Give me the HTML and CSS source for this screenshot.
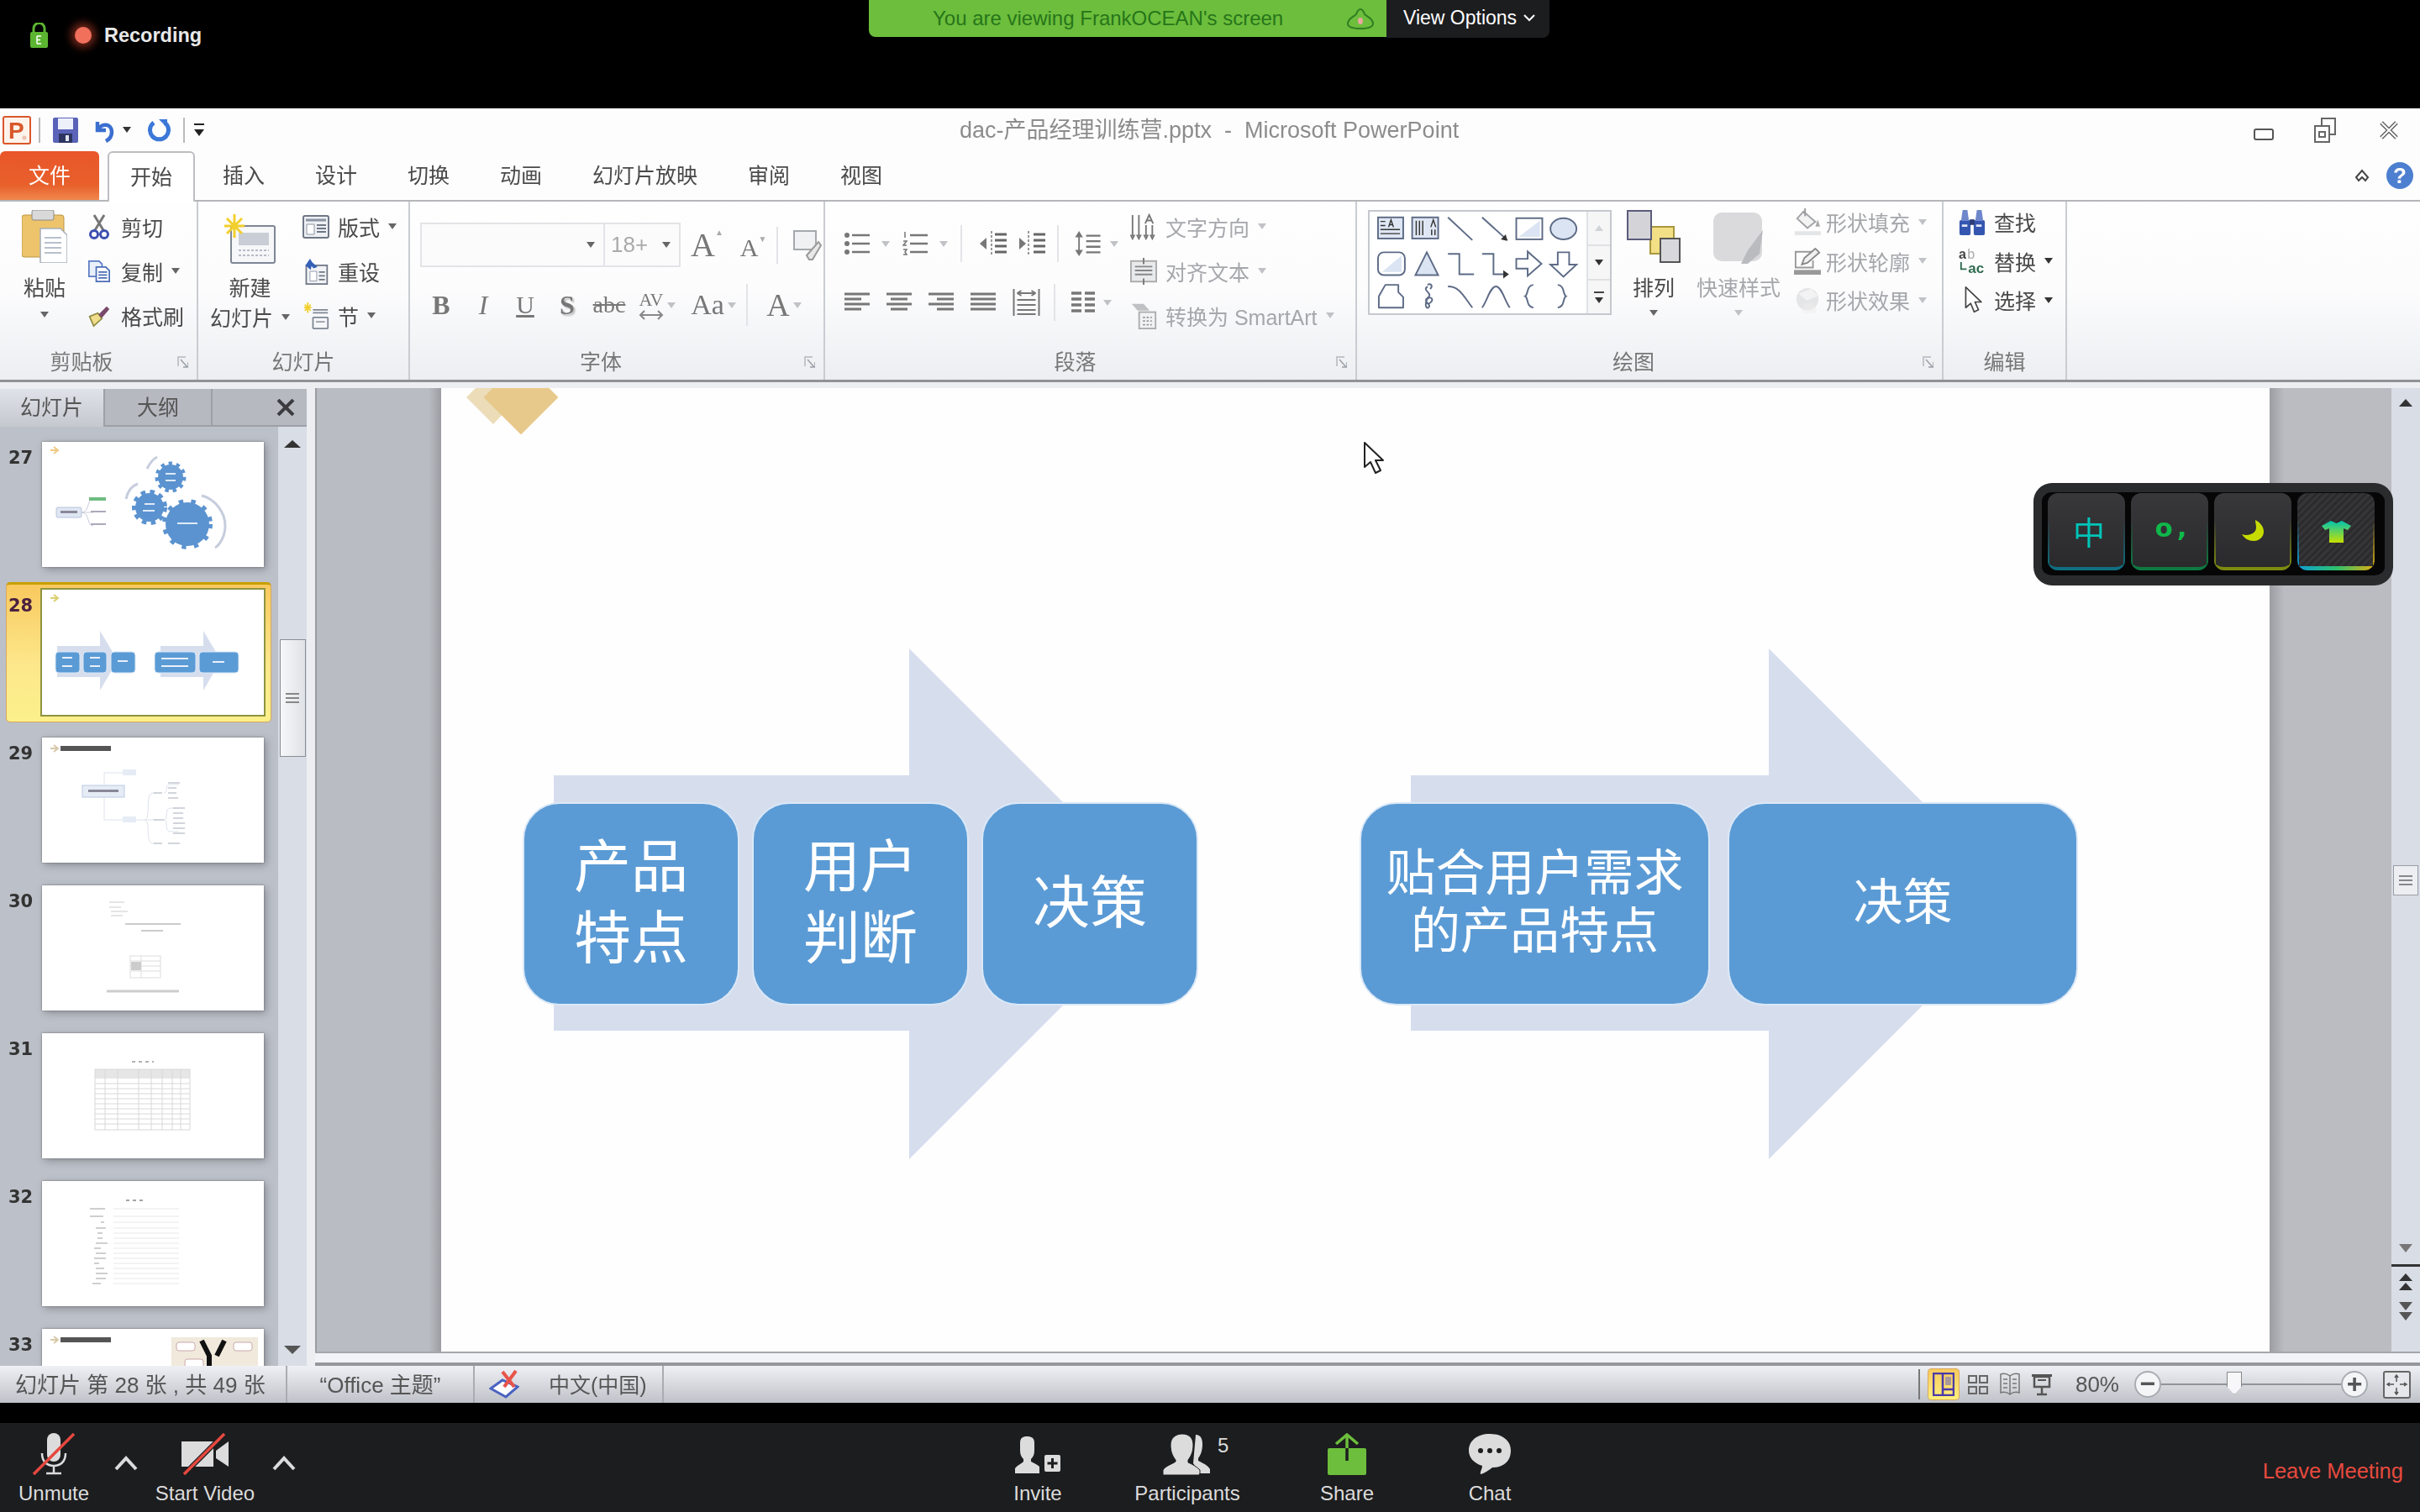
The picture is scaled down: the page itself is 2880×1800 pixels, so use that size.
FILE: index.html
```html
<!DOCTYPE html>
<html lang="zh-CN">
<head>
    <meta charset="UTF-8">
    <title>Zoom - dac-产品经理训练营.pptx</title>
    <link rel="stylesheet" href="styles.css">
</head>
<body>

    <!-- Zoom top strip -->
    <div class="topbar">
        <div class="rec">
            <svg class="lock" viewBox="0 0 21 30"><path d="M4 13V7a6.500 6.500 0 0 1 13 0v6" fill="none" stroke="#5cb531" stroke-width="3"/><rect y="11" width="21" height="19" rx="2" fill="#5cb531"/><path d="M8 16h5M8 20.500h4M8 25h5M8 16v9" stroke="#fff" stroke-width="1.500" fill="none"/></svg>
            <span class="rec-dot"></span>
            <span class="rec-text">Recording</span>
        </div>
        <div class="banner">
            <span class="banner-text">You are viewing FrankOCEAN's screen</span>
            <svg class="banner-ico" viewBox="0 0 32 25"><path d="M16 1c3 0 4 3 5 6 2 2 10 5 10 11 0 4-6 6-15 6S1 22 1 18c0-6 8-9 10-11 1-3 2-6 5-6z" fill="none" stroke="#2f7d22" stroke-width="2"/><ellipse cx="16" cy="15" rx="3" ry="4" fill="#e9a7a0"/></svg>
        </div>
        <div class="view-options">View Options <svg class="chev" viewBox="0 0 14 9"><path d="M1 1l6 6 6-6" fill="none" stroke="#fff" stroke-width="2"/></svg></div>
    </div>

    <!-- PowerPoint window -->
    <div class="ppt">
        <div class="titlebar">
            <div class="qat">
                <svg class="qat-logo" viewBox="0 0 34 34"><rect x="1" y="1" width="32" height="32" rx="2" fill="#fdf3ea" stroke="#d9572b" stroke-width="2"/><text x="7" y="27" class="qat-p">P</text><circle cx="26" cy="26" r="2.500" fill="#f0c0b0"/></svg>
                <span class="qat-sep"></span>
                <svg class="qat-save" viewBox="0 0 30 30"><rect width="30" height="30" rx="2" fill="#5a63b8"/><rect x="6" y="1" width="18" height="13" fill="#eef1fa"/><rect x="7" y="19" width="16" height="11" fill="#2d3560"/><rect x="15" y="21" width="4" height="7" fill="#dfe3ef"/></svg>
                <svg class="qat-undo" viewBox="0 0 25 30"><path d="M5 5v10h10M6 14C10 6 22 7 22 17c0 5-3 9-7 11" fill="none" stroke="#3b6fd0" stroke-width="4.500"/></svg>
                <span class="caret caret-dark"></span>
                <svg class="qat-redo" viewBox="0 0 27 30"><path d="M20 6a11 11 0 1 1-13 0" fill="none" stroke="#3b78d8" stroke-width="5"/><path d="M13 2h10v10z" fill="#3b78d8"/></svg>
                <span class="qat-sep qat-sep-b"></span>
                <svg class="qat-more" viewBox="0 0 14 16"><path d="M1 1h12" stroke="#222" stroke-width="2"/><path d="M1 7h12l-6 8z" fill="#222"/></svg>
            </div>
            <div class="doc-title">dac-产品经理训练营.pptx  -  Microsoft PowerPoint</div>
            <div class="winctl">
                <svg class="win-min" viewBox="0 0 24 14"><rect x="1" y="1" width="22" height="12" rx="2" fill="#fff" stroke="#555" stroke-width="2"/></svg>
                <svg class="win-max" viewBox="0 0 26 30"><rect x="9" y="1" width="16" height="19" fill="#fff" stroke="#666" stroke-width="2"/><rect x="1" y="10" width="17" height="19" fill="#fff" stroke="#666" stroke-width="2"/><rect x="6" y="17" width="7" height="6" fill="none" stroke="#666" stroke-width="2"/></svg>
                <svg class="win-close" viewBox="0 0 24 24"><path d="M3 3l18 18M21 3L3 21" stroke="#666" stroke-width="5"/><path d="M3 3l18 18M21 3L3 21" stroke="#fff" stroke-width="2"/></svg>
            </div>
        </div>

        <div class="tabs">
            <div class="tab tab-file">文件</div>
            <div class="tab tab-active">开始</div>
            <div class="tab">插入</div>
            <div class="tab">设计</div>
            <div class="tab">切换</div>
            <div class="tab">动画</div>
            <div class="tab">幻灯片放映</div>
            <div class="tab">审阅</div>
            <div class="tab">视图</div>
            <div class="tab-tools">
                <svg class="collapse" viewBox="0 0 20 18"><path d="M3 11l7-8 7 8-3 4-4-4-4 4z" fill="#fff" stroke="#444" stroke-width="2"/></svg>
                <div class="help">?</div>
            </div>
        </div>

        <div class="ribbon">
            <!-- 剪贴板 -->
            <section class="group group-clip">
                <div class="group-body">
                    <div class="tall paste">
                        <svg class="paste-ico" viewBox="0 0 54 63"><rect y="6" width="50" height="50" rx="3" fill="#edc46b" stroke="#bb9544"/><rect x="12" width="26" height="12" rx="2" fill="#d9d9d9" stroke="#8a8a8a"/><path d="M22 22h24l8 8v33H22z" fill="#fff" stroke="#a7adb8" stroke-width="1.500"/><path d="M27 33h20M27 39h20M27 45h20M27 51h20" stroke="#b8c0cc" stroke-width="2"/></svg>
                        <span>粘贴</span>
                        <i class="caret tall-caret"></i>
                    </div>
                    <div class="small-col">
                        <div class="small">
                            <svg class="ico ico-s" viewBox="0 0 22 30"><path d="M5 1l11 18M17 1L6 19" stroke="#777" stroke-width="3"/><circle cx="5" cy="24" r="4.500" fill="none" stroke="#3c4fb0" stroke-width="3"/><circle cx="17" cy="24" r="4.500" fill="none" stroke="#3c4fb0" stroke-width="3"/></svg>
                            <span>剪切</span>
                        </div>
                        <div class="small">
                            <svg class="ico ico-s" viewBox="0 0 30 30"><path d="M1 1h14l4 4v17H1z" fill="#eaf0fb" stroke="#5b7cc4" stroke-width="2"/><path d="M11 9h13l5 5v15H11z" fill="#fff" stroke="#4a6cb8" stroke-width="2"/><path d="M14 16h12M14 20h12M14 24h12" stroke="#4a6cb8" stroke-width="2"/></svg>
                            <span>复制</span><i class="caret"></i>
                        </div>
                        <div class="small">
                            <svg class="ico ico-s" viewBox="0 0 32 32"><path d="M2 17l12-5 6 8-12 11z" fill="#f0dd8c" stroke="#8a8a3c" stroke-width="2"/><path d="M15 14L27 2l4 4-11 13z" fill="#7a4a6a"/></svg>
                            <span>格式刷</span>
                        </div>
                    </div>
                </div>
                <div class="group-label label-clip">剪贴板<svg class="launcher" viewBox="0 0 14 16"><path d="M1 1h10v2H3v10H1z" fill="#c2c5ca"/><path d="M5 5l8 9M8 14h6V8" fill="none" stroke="#9aa0a8" stroke-width="1.500"/></svg></div>
            </section>

            <!-- 幻灯片 -->
            <section class="group group-slides">
                <div class="group-body">
                    <div class="tall new-slide">
                        <svg class="new-ico" viewBox="0 0 62 60"><rect x="8" y="14" width="52" height="44" rx="2" fill="#f6f7f9" stroke="#7f8794" stroke-width="2"/><rect x="17" y="22" width="36" height="15" fill="#c9ced6"/><path d="M17 43h36M17 49h36" stroke="#b5bbc4" stroke-width="2" stroke-dasharray="3 2"/><path d="M12 0v28M0 14h24M3 5l18 18M21 5L3 23" stroke="#f3cf2d" stroke-width="3"/></svg>
                        <span>新建</span>
                        <span class="tall-line">幻灯片<i class="caret"></i></span>
                    </div>
                    <div class="small-col">
                        <div class="small">
                            <svg class="ico" viewBox="0 0 32 28"><rect x="1" y="1" width="30" height="26" rx="2" fill="#eef0f4" stroke="#6f7785" stroke-width="2"/><path d="M4 6h24" stroke="#8a93a3" stroke-width="3"/><path d="M5 11h9v12H5z" fill="#fff" stroke="#8a93a3"/><path d="M17 12h11M17 16h11M17 20h11" stroke="#6f7785" stroke-width="2"/></svg>
                            <span>版式</span><i class="caret"></i>
                        </div>
                        <div class="small">
                            <svg class="ico" viewBox="0 0 32 36"><rect x="3" y="10" width="28" height="25" fill="#f1f3f6" stroke="#6f7785" stroke-width="2"/><path d="M8 18h9v13H8z" fill="#fff" stroke="#8a93a3"/><path d="M20 19h8M20 24h8M20 29h8" stroke="#6f7785" stroke-width="2"/><path d="M2 10l6-9 3 5 7 6-5 2-3-3-1 5z" fill="#3560b8"/></svg>
                            <span>重设</span>
                        </div>
                        <div class="small">
                            <svg class="ico" viewBox="0 0 32 36"><path d="M5 0v14M0 7h10M1 3l8 8M9 3l-8 8" stroke="#f3cf2d" stroke-width="2"/><path d="M12 10h20M12 14h20" stroke="#7f8794" stroke-width="2"/><rect x="12" y="20" width="20" height="15" rx="1" fill="#f6f7f9" stroke="#7f8794" stroke-width="2"/><path d="M16 26h12" stroke="#9aa0a8" stroke-width="2"/></svg>
                            <span>节</span><i class="caret"></i>
                        </div>
                    </div>
                </div>
                <div class="group-label">幻灯片</div>
            </section>

            <!-- 字体 -->
            <section class="group group-font">
                <div class="group-body font-body">
                    <div class="font-row">
                        <div class="combo combo-name"><i class="caret"></i></div>
                        <div class="combo combo-size"><span>18+</span><i class="caret"></i></div>
                        <span class="grow-a">A<sup>▲</sup></span>
                        <span class="shrink-a">A<sup>▼</sup></span>
                        <span class="vsep"></span>
                        <svg class="clear-ico" viewBox="0 0 34 36"><rect x="1" y="1" width="26" height="22" fill="#f0f1f3" stroke="#a5a8ad" stroke-width="2"/><path d="M16 30l14-16 3 4-10 17h-4z" fill="#e8e8e8" stroke="#9a9a9a" stroke-width="2"/></svg>
                    </div>
                    <div class="font-row font-row-b">
                        <span class="fmt fmt-b">B</span>
                        <span class="fmt fmt-i">I</span>
                        <span class="fmt fmt-u">U</span>
                        <span class="fmt fmt-sh">S</span>
                        <span class="fmt fmt-st">abc</span>
                        <span class="fmt fmt-av">
                            <span class="av-stack">AV<svg class="av-arrow" viewBox="0 0 30 12"><path d="M2 6h26M7 1L2 6l5 5M23 1l5 5-5 5" fill="none" stroke="#888" stroke-width="2"/></svg></span>
                            <i class="caret caret-off"></i>
                        </span>
                        <span class="fmt fmt-aa">Aa<i class="caret caret-off"></i></span>
                        <span class="vsep vsep-b"></span>
                        <span class="fmt fmt-color">A<i class="caret caret-off"></i></span>
                    </div>
                </div>
                <div class="group-label label-font">字体<svg class="launcher" viewBox="0 0 14 16"><path d="M1 1h10v2H3v10H1z" fill="#c2c5ca"/><path d="M5 5l8 9M8 14h6V8" fill="none" stroke="#9aa0a8" stroke-width="1.500"/></svg></div>
            </section>

            <!-- 段落 -->
            <section class="group group-para">
                <div class="group-body">
                    <div class="para-left">
                        <div class="para-row">
                            <svg class="pico" viewBox="0 0 30 30"><path d="M9 5h21M9 15h21M9 25h21" stroke="#777" stroke-width="2.500"/><circle cx="3" cy="5" r="3" fill="#777"/><circle cx="3" cy="15" r="3" fill="#777"/><circle cx="3" cy="25" r="3" fill="#777"/></svg>
                            <i class="caret caret-off pcaret"></i>
                            <svg class="pico" viewBox="0 0 30 30"><path d="M9 5h21M9 15h21M9 25h21" stroke="#777" stroke-width="2.500"/><path d="M3 1v7M1 12h4l-4 5h4M1 22h4l-2 3 2 3H1" fill="none" stroke="#777" stroke-width="1.500"/></svg>
                            <i class="caret caret-off pcaret"></i>
                            <span class="vsep vsep-p"></span>
                            <svg class="pico-w" viewBox="0 0 33 32"><path d="M15 1v30" stroke="#999" stroke-width="2" stroke-dasharray="3 2"/><path d="M19 5h14M19 12h14M19 19h14M19 26h14" stroke="#666" stroke-width="3"/><path d="M1 16l8-7v14z" fill="#777"/></svg>
                            <svg class="pico-w pico-gap" viewBox="0 0 33 32"><path d="M13 1v30" stroke="#999" stroke-width="2" stroke-dasharray="3 2"/><path d="M19 5h14M19 12h14M19 19h14M19 26h14" stroke="#666" stroke-width="3"/><path d="M10 16l-8-7v14z" fill="#777"/></svg>
                            <span class="vsep vsep-q"></span>
                            <svg class="pico-w" viewBox="0 0 32 34"><path d="M5 4v26" stroke="#777" stroke-width="2"/><path d="M5 1l5 8H0zM5 33l5-8H0z" fill="#777"/><path d="M14 7h18M14 14h18M14 21h18M14 28h18" stroke="#777" stroke-width="2.500"/></svg>
                            <i class="caret caret-off"></i>
                        </div>
                        <div class="para-row para-row-b">
                            <svg class="pico al" viewBox="0 0 30 24"><path d="M0 2h30M0 8h20M0 14h30M0 20h20" stroke="#777" stroke-width="3"/></svg>
                            <svg class="pico al" viewBox="0 0 30 24"><path d="M0 2h30M5 8h20M0 14h30M5 20h20" stroke="#777" stroke-width="3"/></svg>
                            <svg class="pico al" viewBox="0 0 30 24"><path d="M0 2h30M10 8h20M0 14h30M10 20h20" stroke="#777" stroke-width="3"/></svg>
                            <svg class="pico al" viewBox="0 0 30 24"><path d="M0 2h30M0 8h30M0 14h30M0 20h30" stroke="#777" stroke-width="3"/></svg>
                            <svg class="pico-w" viewBox="0 0 32 32"><path d="M1 0v32M31 0v32M6 5h20M5 5l5-3M5 5l5 3M27 5l-5-3M27 5l-5 3M5 13h22M5 19h22M5 25h22M5 30h22" fill="none" stroke="#777" stroke-width="2"/></svg>
                            <span class="vsep vsep-r"></span>
                            <svg class="pico pico-col" viewBox="0 0 28 28"><path d="M0 3h12M16 3h12M0 10h12M16 10h12M0 17h12M16 17h12M0 24h12M16 24h12" stroke="#777" stroke-width="3.500"/></svg>
                            <i class="caret caret-off"></i>
                        </div>
                    </div>
                    <div class="small-col para-right">
                        <div class="small off">
                            <svg class="ico" viewBox="0 0 34 32"><path d="M3 1v27M11 1v27M3 31l-2-4h4zM11 31l-2-4h4zM20 14v14M28 14v14M20 31l-2-4h4zM28 31l-2-4h4z" fill="none" stroke="#777" stroke-width="2"/><path d="M19 12l5-11 5 11M21 8h6" fill="none" stroke="#777" stroke-width="2"/></svg>
                            <span>文字方向</span><i class="caret caret-off"></i>
                        </div>
                        <div class="small off">
                            <svg class="ico" viewBox="0 0 34 34"><rect x="1" y="4" width="32" height="26" fill="#e9eaec" stroke="#aaa" stroke-width="2"/><path d="M6 11h22M6 16h22M6 21h22" stroke="#888" stroke-width="2"/><path d="M17 0v8M17 34v-8" stroke="#777" stroke-width="2"/></svg>
                            <span>对齐文本</span><i class="caret caret-off"></i>
                        </div>
                        <div class="small off">
                            <svg class="ico" viewBox="0 0 34 36"><path d="M1 2h16l8 9H9z" fill="#bfc1c5"/><rect x="11" y="13" width="22" height="22" fill="#f1f2f4" stroke="#aaa" stroke-width="2"/><path d="M16 20h12M16 25h12M16 30h12" stroke="#999" stroke-width="2" stroke-dasharray="3 2"/></svg>
                            <span>转换为 SmartArt</span><i class="caret caret-off"></i>
                        </div>
                    </div>
                </div>
                <div class="group-label label-para">段落<svg class="launcher" viewBox="0 0 14 16"><path d="M1 1h10v2H3v10H1z" fill="#c2c5ca"/><path d="M5 5l8 9M8 14h6V8" fill="none" stroke="#9aa0a8" stroke-width="1.500"/></svg></div>
            </section>

            <!-- 绘图 -->
            <section class="group group-draw">
                <div class="group-body">
                    <div class="gallery">
                        <svg class="shapes" viewBox="0 0 260 125" fill="none" stroke="#5d6b86" stroke-width="2">
                            <rect x="7" y="7" width="31" height="26" fill="#dfe7f4"/><path d="M20 19l3-9 3 9M21 16h4M10 12h6M10 17h6M10 22h24M10 27h24" stroke="#333" stroke-width="1.500"/>
                            <rect x="49" y="7" width="32" height="26" fill="#dfe7f4"/><path d="M54 11v18M58 11v18M62 11v18M72 19l3-9 3 9M73 22v7M77 22v7" stroke="#333" stroke-width="1.500"/>
                            <path d="M93 7l30 28"/>
                            <path d="M135 7l31 28"/><path d="M166 36l-8-2 6-6z" fill="#333" stroke="none"/>
                            <rect x="177" y="8" width="32" height="26"/><path d="M180 31l26-20v20z" fill="#dbe4f2" stroke="none"/>
                            <ellipse cx="235" cy="21" rx="16" ry="13" fill="#dbe4f2"/>
                            <rect x="7" y="50" width="33" height="28" rx="7"/><path d="M12 74l24-20v20z" fill="#dbe4f2" stroke="none"/>
                            <path d="M67 50l14 28H53z" fill="#dbe4f2"/>
                            <path d="M93 52h14v25h18"/>
                            <path d="M135 52h14v25h14"/><path d="M168 77l-7-5v10z" fill="#333" stroke="none"/>
                            <path d="M177 58h14v-9l17 15-17 15v-9h-14z" fill="#fff"/>
                            <path d="M228 50h14v15h9l-16 15-16-15h9z" fill="#fff"/>
                            <path d="M8 104l8-14h16v9l6 6v13H8z" stroke-linejoin="round"/>
                            <path d="M68 92c-8 5 8 8 0 14-7 5 6 8 1 12-6 2-3-15 3-12 5 2-3 10-5 6M68 90c4-3 7 2 3 5" />
                            <path d="M93 92c14 0 18 10 30 26"/>
                            <path d="M135 118c6-8 10-26 17-26s11 18 17 26"/>
                            <path d="M198 90c-9 1-6 12-10 14 4 2 1 13 10 14"/>
                            <path d="M228 90c9 1 6 12 10 14-4 2-1 13-10 14"/>
                        </svg>
                        <div class="gal-scroll">
                            <span class="gal-cell"><i class="caret caret-up"></i></span>
                            <span class="gal-cell gal-mid"><i class="caret caret-dark"></i></span>
                            <span class="gal-cell gal-more"><i class="gal-dash"></i><i class="caret caret-dark"></i></span>
                        </div>
                    </div>
                    <div class="tall arrange">
                        <svg class="arr-ico" viewBox="0 0 64 63"><rect x="28" y="20" width="28" height="32" fill="#f3df85" stroke="#a8983e" stroke-width="2"/><rect x="1" y="1" width="28" height="34" fill="#d4d4d8" stroke="#5b5b7a" stroke-width="2"/><rect x="40" y="34" width="23" height="28" fill="#d8d8dc" stroke="#555" stroke-width="2"/></svg>
                        <span>排列</span>
                        <i class="caret tall-caret"></i>
                    </div>
                    <div class="tall quick off">
                        <svg class="quick-ico" viewBox="0 0 62 63"><rect x="1" y="1" width="58" height="58" rx="10" fill="#dadadc"/><path d="M34 62l8-16 18-24-4 28-14 12z" fill="#b9bbbe"/></svg>
                        <span>快速样式</span>
                        <i class="caret caret-off tall-caret"></i>
                    </div>
                    <div class="small-col compact-col format-col">
                        <div class="small off">
                            <svg class="ico" viewBox="0 0 34 34"><path d="M12 4l15 13-10 8L4 13z" fill="#f3f3f4" stroke="#a0a2a6" stroke-width="2"/><path d="M14 0v10" stroke="#999" stroke-width="2"/><path d="M30 14l3 9h-6z" fill="#aaa"/><rect x="1" y="29" width="33" height="5" fill="#e4e5e7"/></svg>
                            <span>形状填充</span><i class="caret caret-off"></i>
                        </div>
                        <div class="small off">
                            <svg class="ico" viewBox="0 0 34 34"><path d="M24 5H2v20h22V16" fill="none" stroke="#999" stroke-width="2"/><path d="M10 21l3-8L27 1l5 5-15 13z" fill="#f0f0f1" stroke="#888" stroke-width="2"/><rect y="28" width="34" height="6" fill="#999"/></svg>
                            <span>形状轮廓</span><i class="caret caret-off"></i>
                        </div>
                        <div class="small off">
                            <svg class="ico" viewBox="0 0 34 34"><circle cx="17" cy="16" r="14" fill="#e4e5e7"/><path d="M6 9l16-6 8 9-14 6z" fill="#f3f3f4"/><circle cx="19" cy="29" r="9" fill="#eee" opacity=".5"/></svg>
                            <span>形状效果</span><i class="caret caret-off"></i>
                        </div>
                    </div>
                </div>
                <div class="group-label draw-label">绘图<svg class="launcher" viewBox="0 0 14 16"><path d="M1 1h10v2H3v10H1z" fill="#c2c5ca"/><path d="M5 5l8 9M8 14h6V8" fill="none" stroke="#9aa0a8" stroke-width="1.500"/></svg></div>
            </section>

            <!-- 编辑 -->
            <section class="group group-edit">
                <div class="group-body">
                    <div class="small-col compact-col">
                        <div class="small">
                            <svg class="ico" viewBox="0 0 34 34"><rect x="1" y="15" width="14" height="19" rx="2" fill="#3556b0"/><rect x="19" y="15" width="14" height="19" rx="2" fill="#3556b0"/><path d="M5 2h6l2 14H3zM23 2h6l2 14H21z" fill="#6e87cc"/><rect x="14" y="14" width="6" height="7" fill="#2a3c78"/><path d="M4 22h7M22 22h7" stroke="#dfe7f6" stroke-width="3"/></svg>
                            <span>查找</span>
                        </div>
                        <div class="small">
                            <svg class="ico" viewBox="0 0 34 34"><text x="0" y="14" class="ico-ab">a</text><text x="11" y="14" class="ico-ab ico-ab-b">b</text><text x="12" y="32" class="ico-ac">ac</text><path d="M3 18v9h7" fill="none" stroke="#2e6b4e" stroke-width="2"/></svg>
                            <span>替换</span><i class="caret caret-dark"></i>
                        </div>
                        <div class="small">
                            <svg class="ico" viewBox="0 0 34 38"><path d="M8 1v29l7-6 5 12 6-3-5-11h9z" fill="#fff" stroke="#444" stroke-width="2" stroke-linejoin="round"/></svg>
                            <span>选择</span><i class="caret caret-dark"></i>
                        </div>
                    </div>
                </div>
                <div class="group-label">编辑</div>
            </section>
        </div>

        <div class="work">
            <!-- Slide sorter panel -->
            <aside class="panel">
                <div class="panel-tabs">
                    <div class="ptab ptab-active">幻灯片</div>
                    <div class="ptab">大纲</div>
                    <div class="ptab ptab-close"><svg class="ptab-x" viewBox="0 0 22 20"><path d="M2 1l18 18M20 1L2 19" stroke="#3c3c40" stroke-width="4"/></svg></div>
                </div>
                <div class="panel-list">
                    <div class="thumbs">
                        <div class="thumb-row">
                            <span class="num">27</span>
                            <svg class="thumb" viewBox="0 0 264 149">
                                <path d="M10 10h8M14 6l5 4-5 4" stroke="#eecb84" stroke-width="2" fill="none"/>
                                <rect x="17" y="78" width="30" height="12" rx="2" fill="#dfe6f2" stroke="#b6c4dc"/><rect x="22" y="82" width="20" height="3" fill="#889"/>
                                <path d="M47 84c10 0 6-16 14-16M47 84h14M47 84c10 0 6 16 14 16" fill="none" stroke="#ccd" />
                                <rect x="56" y="66" width="20" height="4" fill="#6fbc80"/><rect x="58" y="82" width="18" height="2" fill="#aab"/><rect x="58" y="97" width="18" height="2" fill="#aab"/>
                                <circle cx="153" cy="42" r="15" fill="#5b93d0" stroke="#5b93d0" stroke-width="7" stroke-dasharray="4 4.500"/>
                                <circle cx="128" cy="78" r="17" fill="#5b93d0" stroke="#5b93d0" stroke-width="8" stroke-dasharray="5 5"/>
                                <circle cx="173" cy="98" r="26" fill="#5b93d0" stroke="#5b93d0" stroke-width="8" stroke-dasharray="5 9"/>
                                <path d="M147 38h12M147 46h12M122 74h12M120 82h14M161 97h24" stroke="#dfeaf6" stroke-width="2"/>
                                <path d="M125 32c4-8 8-12 12-14M100 68c2-10 8-16 14-18M190 64c16 4 28 20 28 36 0 12-6 22-12 26" fill="none" stroke="#c6cddd" stroke-width="3"/>
                            </svg>
                        </div>
                        <div class="thumb-row thumb-row-active">
                            <span class="num">28</span>
                            <svg class="thumb" viewBox="0 0 264 149">
                                <path d="M10 10h8M14 6l5 4-5 4" stroke="#dccf6e" stroke-width="2" fill="none"/>
                                <path d="M18 67h51V49l21 35-21 36v-16H18zM141 67h51V49l21 35-21 36v-16h-51z" fill="#d6deee"/>
                                <g fill="#5b9bd5" stroke="#dbe8f7"><rect x="16" y="74" width="29" height="25" rx="4"/><rect x="49" y="74" width="28" height="25" rx="4"/><rect x="82" y="74" width="29" height="25" rx="4"/><rect x="134" y="74" width="49" height="25" rx="4"/><rect x="187" y="74" width="47" height="25" rx="4"/></g>
                                <path d="M24 81h12M24 91h12M57 81h12M57 91h12M90 85h12M142 82h32M142 91h32M203 86h14" stroke="#e8f0fa" stroke-width="2"/>
                            </svg>
                        </div>
                        <div class="thumb-row">
                            <span class="num">29</span>
                            <svg class="thumb" viewBox="0 0 264 149">
                                <path d="M10 13h8M14 9l5 4-5 4" stroke="#d8c8a8" stroke-width="2" fill="none"/>
                                <rect x="22" y="10" width="60" height="6" fill="#555"/>
                                <rect x="48" y="57" width="50" height="14" fill="#e6ecf6" stroke="#b9c9e2"/><rect x="55" y="62" width="36" height="3" fill="#889"/>
                                <path d="M74 57V42h22M74 71v27h22M112 98h10c8 0 0-32 10-32h4M122 98h14M122 98c8 0 0 28 10 28h4M145 66c6 0 0-10 8-10h10M145 98c6 0 0-14 8-14h10M145 98c6 0 0 14 8 14h10" fill="none" stroke="#dde2ea"/>
                                <rect x="96" y="38" width="16" height="7" fill="#e6ecf6"/><rect x="96" y="94" width="16" height="7" fill="#e6ecf6"/>
                                <path d="M133 66h10M133 98h12M133 126h10M150 54h14M150 60h10M150 66h10M150 72h12M156 84h14M156 90h12M156 96h12M156 102h14M156 108h14M156 114h14M150 126h14" stroke="#c4c8d0" stroke-width="1.500"/>
                            </svg>
                        </div>
                        <div class="thumb-row">
                            <span class="num">30</span>
                            <svg class="thumb" viewBox="0 0 264 149">
                                <path d="M80 20h18M80 26h14M82 31h20M82 36h14" stroke="#ddd" stroke-width="1.500"/>
                                <path d="M99 46h66" stroke="#bbb" stroke-width="1.500"/>
                                <path d="M118 54h26" stroke="#bbb" stroke-width="1.500"/>
                                <rect x="105" y="84" width="36" height="26" fill="#fff" stroke="#ddd"/><path d="M105 90h36M105 96h36M105 102h36M118 84v26" stroke="#ddd"/><rect x="106" y="91" width="12" height="10" fill="#ccc"/>
                                <path d="M77 126h86" stroke="#ccc" stroke-width="3"/>
                            </svg>
                        </div>
                        <div class="thumb-row">
                            <span class="num">31</span>
                            <svg class="thumb" viewBox="0 0 264 149">
                                <path d="M107 34h26" stroke="#999" stroke-width="1.500" stroke-dasharray="4 4"/>
                                <rect x="63" y="43" width="113" height="11" fill="#e6e6e6"/>
                                <path d="M63 43h113v72H63zM63 60h113M63 66h113M63 72h113M63 78h113M63 84h113M63 90h113M63 96h113M63 102h113M63 108h113M75 43v72M90 43v72M115 43v72M130 43v72M143 43v72M155 43v72M165 43v72" fill="none" stroke="#d8d8d8"/>
                            </svg>
                        </div>
                        <div class="thumb-row">
                            <span class="num">32</span>
                            <svg class="thumb" viewBox="0 0 264 149">
                                <path d="M100 23h22" stroke="#888" stroke-width="1.500" stroke-dasharray="4 4"/>
                                <path d="M57 33h18M57 42h16M70 49h4M64 56h12M66 62h6M66 68h6M64 74h14M62 80h8M64 86h12M62 92h14M62 98h6M64 104h10M64 110h14M64 116h12M60 122h10" stroke="#c0c0c0" stroke-width="1.500"/>
                                <path d="M85 33h78M85 42h78M85 49h78M85 56h78M85 62h78M85 68h78M85 74h78M85 80h78M85 86h78M85 92h78M85 98h78M85 104h78M85 110h78M85 116h78M85 122h78" stroke="#e8e8e8"/>
                            </svg>
                        </div>
                        <div class="thumb-row">
                            <span class="num">33</span>
                            <svg class="thumb" viewBox="0 0 264 149">
                                <path d="M10 13h8M14 9l5 4-5 4" stroke="#d8c8a8" stroke-width="2" fill="none"/>
                                <rect x="22" y="10" width="60" height="6" fill="#555"/>
                                <rect x="154" y="10" width="103" height="50" fill="#f0e9dc"/>
                                <path d="M190 14l9 18v28M217 14l-9 18" fill="none" stroke="#111" stroke-width="6"/>
                                <rect x="160" y="16" width="22" height="10" rx="3" fill="#fff" stroke="#caa"/><rect x="228" y="16" width="22" height="10" rx="3" fill="#fff" stroke="#caa"/><rect x="170" y="36" width="22" height="10" rx="3" fill="#fff" stroke="#caa"/>
                            </svg>
                        </div>
                    </div>
                    <div class="panel-scroll">
                        <i class="tri tri-up"></i>
                        <div class="panel-thumb"><span class="grip"></span></div>
                        <i class="tri tri-down"></i>
                    </div>
                </div>
            </aside>

            <main class="main">
                <div class="view">
                    <div class="pad pad-left"></div>
                    <div class="slide">
                        <svg class="slide-deco" viewBox="0 0 112 56"><path d="M2 11L13 0h40l11 11-30 32z" fill="#ecdcb8"/><path d="M24 11L35 0h64l11 11-43 43z" fill="#e8c98c" stroke="#e8c98c" stroke-width="2" stroke-linejoin="round"/></svg>
                        <div class="diagram diagram-a">
                            <svg class="big-arrow" viewBox="0 0 763 608"><path d="M36 151h423V0l304 304-304 304V455H36z"/></svg>
                            <div class="box box-narrow box-big">产品<br>特点</div>
                            <div class="box box-narrow box-big">用户<br>判断</div>
                            <div class="box box-narrow box-big">决策</div>
                        </div>
                        <div class="diagram diagram-b">
                            <svg class="big-arrow" viewBox="0 0 791 608"><path d="M61 151h426V0l304 304-304 304V455H61z"/></svg>
                            <div class="box box-wide">贴合用户需求<br>的产品特点</div>
                            <div class="box box-wide">决策</div>
                        </div>
                    </div>
                    <div class="pad pad-right"></div>
                    <div class="vscroll">
                        <i class="tri tri-up"></i>
                        <div class="vs-thumb"><span class="grip"></span></div>
                        <i class="tri tri-down tri-off"></i>
                        <span class="vs-line"></span>
                        <i class="tri tri-up tri-pair"></i><i class="tri tri-up"></i>
                        <i class="tri tri-down tri-pair tri-next"></i><i class="tri tri-down"></i>
                    </div>
                </div>
                <div class="hband"></div>

                <svg class="cursor" viewBox="0 0 26 39"><path d="M2 2v29l7-6 6 13 6-3-6-12h9z" fill="#fff" stroke="#222" stroke-width="2" stroke-linejoin="round"/></svg>

                <div class="ime">
                    <div class="key key-zh">中</div>
                    <div class="key key-punc">o,</div>
                    <div class="key key-moon"><svg class="key-ico" viewBox="0 0 26 25"><path d="M16 0c6 3 10 8 10 14 0 6-5 11-12 11-6 0-11-3-14-8 8 3 17-1 17-8 0-3-1-6-1-9z" fill="#c6dc00"/></svg></div>
                    <div class="key key-skin"><svg class="key-shirt" viewBox="0 0 35 26"><defs><linearGradient id="shirtFill" x1="0" y1="0" x2="0" y2="1"><stop offset="0" stop-color="#00c4b0"/><stop offset="1" stop-color="#c8e000"/></linearGradient></defs><path d="M11 0l6.500 3 6.500-3 11 6-4 5-5-2v17H9V9l-5 2-4-5z" fill="url(#shirtFill)"/></svg></div>
                </div>
            </main>
        </div>

        <div class="status">
            <div class="st-item st-count">幻灯片 第 28 张 , 共 49 张</div>
            <div class="st-item st-theme">“Office 主题”</div>
            <div class="st-item st-lang">
                <svg class="st-book" viewBox="0 0 36 36"><path d="M2 24l14-10 18 8-14 12z" fill="#fff" stroke="#4a62c0" stroke-width="3"/><path d="M16 4l14 18M32 3L18 22" stroke="#e8534a" stroke-width="4"/></svg>
                <span>中文(中国)</span>
            </div>
            <div class="st-right">
                <span class="st-sep"></span>
                <div class="vw vw-active"><svg viewBox="0 0 26 28"><path d="M1 1h24v26H1zM12 1v26M12 20h13" fill="none" stroke="#4b3aa8" stroke-width="2.500"/><path d="M15 5h7v10h-7z" fill="#a99"/></svg></div>
                <svg class="vw-ico" viewBox="0 0 24 26"><path d="M1 3h9v8H1zM14 3h9v8h-9zM1 16h9v8H1zM14 16h9v8h-9z" fill="none" stroke="#666" stroke-width="2"/></svg>
                <svg class="vw-ico" viewBox="0 0 24 28"><path d="M12 4C8 1 4 1 1 2v22c3-1 7-1 11 2 4-3 8-3 11-2V2c-3-1-7-1-11 2zM12 4v22M4 8h5M4 13h5M4 18h5M15 8h5M15 13h5M15 18h5" fill="none" stroke="#777" stroke-width="1.500"/></svg>
                <svg class="vw-ico" viewBox="0 0 24 28"><path d="M0 2h24v3H0z" fill="#555"/><path d="M3 5h18v12H3zM12 17v8M6 26h12" fill="none" stroke="#555" stroke-width="2.500"/><path d="M7 9h10" stroke="#555" stroke-width="2"/></svg>
                <span class="zoom-pct">80%</span>
                <div class="zm-btn">−</div>
                <div class="zm-track"><span class="zm-thumb"></span></div>
                <div class="zm-btn">+</div>
                <svg class="zm-fit" viewBox="0 0 33 33"><rect x="1" y="1" width="31" height="31" rx="2" fill="#e6e7ea" stroke="#666" stroke-width="2"/><path d="M16 5v8M16 20v8M5 16h8M20 16h8M14 8l2-3 2 3M14 25l2 3 2-3M8 14l-3 2 3 2M25 14l3 2-3 2" fill="none" stroke="#555" stroke-width="1.500"/></svg>
            </div>
        </div>
    </div>

    <!-- Zoom meeting controls -->
    <div class="zoombar">
        <div class="ctrl ctrl-mute">
            <svg class="ctrl-ico" viewBox="0 0 50 50"><rect x="17" y="0" width="16" height="34" rx="8" fill="#dcdcdc"/><path d="M11 24c0 10 6 15 14 15s14-5 14-15M25 39v8M16 48h18" fill="none" stroke="#dcdcdc" stroke-width="2.500"/><path d="M1 49L49 1" stroke="#e5483f" stroke-width="3.500"/></svg>
            <span>Unmute</span>
        </div>
        <div class="ctrl-chev"><svg class="up-chev" viewBox="0 0 28 18"><path d="M2 16L14 3l12 13" fill="none" stroke="#dcdcdc" stroke-width="4"/></svg></div>
        <div class="ctrl ctrl-video">
            <svg class="ctrl-ico ctrl-ico-video" viewBox="0 0 58 50"><path d="M1 10h38v30H1zM42 21l15-11v30L42 30z" fill="#dcdcdc"/><path d="M4 49L52 1" stroke="#1c1d1f" stroke-width="6"/><path d="M4 49L52 1" stroke="#e5483f" stroke-width="3.500"/></svg>
            <span>Start Video</span>
        </div>
        <div class="ctrl-chev"><svg class="up-chev" viewBox="0 0 28 18"><path d="M2 16L14 3l12 13" fill="none" stroke="#dcdcdc" stroke-width="4"/></svg></div>

        <div class="ctrl ctrl-invite">
            <svg class="ctrl-ico ctrl-ico-invite" viewBox="0 0 56 50"><path d="M15 4c6 0 9 2 9 8v9c0 5-2 8-4 10v3c4 2 8 4 10 6v8H1v-6c3-4 7-5 10-8v-3c-2-2-4-5-4-10v-9c0-6 3-8 8-8z" fill="#dcdcdc"/><rect x="36" y="26" width="19" height="20" rx="2" fill="#dcdcdc"/><path d="M45.500 30v12M39.500 36h12" stroke="#1c1d1f" stroke-width="3"/></svg>
            <span>Invite</span>
        </div>
        <div class="ctrl ctrl-part">
            <div class="part-ico">
                <svg class="ctrl-ico ctrl-ico-part" viewBox="0 0 60 50"><path d="M40 2c6 0 8 5 8 11 0 8-2 13-5 17v3c6 3 11 5 14 10v5H45l-8-12z" fill="#dcdcdc"/><path d="M24 1c8 0 13 5 13 13 0 9-3 14-6 18v3c5 2 10 5 14 9v4l-1 2H1v-6c3-5 11-7 15-10v-2c-3-4-6-9-6-18 0-8 6-13 14-13z" fill="#dcdcdc" stroke="#1c1d1f"/></svg>
                <span class="part-count">5</span>
            </div>
            <span>Participants</span>
        </div>
        <div class="ctrl ctrl-share">
            <svg class="ctrl-ico ctrl-ico-share" viewBox="0 0 46 50"><rect y="18" width="46" height="32" rx="2" fill="#6cbe3c"/><path d="M23 33V3" stroke="#1c1d1f" stroke-width="3.500"/><path d="M23 18V3" stroke="#6cbe3c" stroke-width="3.500"/><path d="M10 13L23 2l13 11" fill="none" stroke="#6cbe3c" stroke-width="3.500"/></svg>
            <span>Share</span>
        </div>
        <div class="ctrl ctrl-chat">
            <svg class="ctrl-ico ctrl-ico-chat" viewBox="0 0 52 50"><path d="M26 1c15 0 25 8 25 20 0 13-9 20-22 20-4 3-9 7-14 8-1-3 2-6 2-10C7 36 1 29 1 21 1 9 11 1 26 1z" fill="#dcdcdc"/><circle cx="15" cy="21" r="3" fill="#1c1d1f"/><circle cx="26" cy="21" r="3" fill="#1c1d1f"/><circle cx="37" cy="21" r="3" fill="#1c1d1f"/></svg>
            <span>Chat</span>
        </div>
        <div class="leave">Leave Meeting</div>
    </div>

</body>
</html>
```

FILE: styles.css
```css
* {
    box-sizing: border-box;
}

html, body {
    margin: 0;
    height: 100%;
}

body {
    width: 2880px;
    height: 1800px;
    overflow: hidden;
    background: #000;
    font-family: "Liberation Sans", "Noto Sans CJK SC", sans-serif;
    display: flex;
    flex-direction: column;
}

svg {
    display: block;
    flex: none;
}

i {
    display: block;
}

/* Top strip */
.topbar {
    height: 129px;
    display: flex;
    align-items: flex-start;
}

.rec {
    width: 1034px;
    height: 84px;
    padding-left: 36px;
    display: flex;
    align-items: center;
}

.lock {
    width: 21px;
    height: 30px;
}

.rec-dot {
    width: 20px;
    height: 20px;
    margin-left: 32px;
    border-radius: 50%;
    background: #f0705c;
    box-shadow: 0 0 10px 5px #6c2418;
}

.rec-text {
    margin-left: 15px;
    color: #e8e8e8;
    font-size: 23.500px;
    font-weight: 700;
}

.banner {
    width: 616px;
    height: 44px;
    padding-left: 76px;
    display: flex;
    align-items: center;
    background: #6cbe3c;
    border-bottom-left-radius: 8px;
    color: #27751a;
    font-size: 24px;
}

.banner-text {
    width: 493px;
}

.banner-ico {
    width: 32px;
    height: 25px;
}

.view-options {
    width: 194px;
    height: 45px;
    padding: 0 0 3px 20px;
    display: flex;
    align-items: center;
    gap: 8px;
    background: #1c1d1f;
    border-bottom-right-radius: 8px;
    color: #fff;
    font-size: 23px;
}

.chev {
    width: 14px;
    height: 9px;
}

/* PowerPoint window */
.ppt {
    height: 1541px;
    display: flex;
    flex-direction: column;
    background: #fdfdfe;
    filter: blur(0.6px);
}

.titlebar {
    height: 51px;
    display: flex;
    align-items: center;
    flex: none;
}

.qat {
    width: 1142px;
    padding-left: 3px;
    display: flex;
    align-items: center;
}

.qat-logo {
    width: 34px;
    height: 34px;
}

.qat-p {
    font-size: 28px;
    font-weight: 700;
    fill: #d9572b;
}

.qat-sep {
    width: 2px;
    height: 30px;
    margin-left: 9px;
    background: #bbb;
}

.qat-save {
    width: 30px;
    height: 30px;
    margin-left: 15px;
}

.qat-undo {
    width: 25px;
    height: 30px;
    margin-left: 18px;
}

.qat-redo {
    width: 27px;
    height: 30px;
    margin-left: 20px;
}

.qat-sep-b {
    margin-left: 15px;
}

.qat-more {
    width: 14px;
    height: 16px;
    margin-left: 10px;
}

.doc-title {
    width: 1500px;
    padding-bottom: 4px;
    color: #8c8c8c;
    font-size: 27px;
    white-space: pre;
}

.winctl {
    margin-left: auto;
    display: flex;
    align-items: center;
}

.win-min {
    width: 24px;
    height: 14px;
    margin-top: 10px;
}

.win-max {
    width: 26px;
    height: 30px;
    margin-left: 48px;
}

.win-close {
    width: 24px;
    height: 24px;
    margin-left: 51px;
    margin-right: 25px;
}

.tabs {
    height: 58px;
    display: flex;
    flex: none;
    font-size: 25px;
    color: #4a4a4a;
}

.tab {
    padding: 0 30px;
    line-height: 58px;
    white-space: nowrap;
}

.tab-file {
    width: 118px;
    margin-right: 10px;
    padding: 0;
    text-align: center;
    color: #fff;
    background: linear-gradient(#e9562a, #e8602c 70%, #f0874c);
    border-radius: 6px 6px 0 0;
}

.tab-active {
    width: 104px;
    margin-right: 3px;
    padding: 0 25px;
    background: #fff;
    border: 2px solid #bcbec2;
    border-bottom: 0;
    border-radius: 6px 6px 0 0;
    margin-bottom: -2px;
    height: 60px;
    position: relative;
    z-index: 1;
}

.tab-tools {
    margin-left: auto;
    padding-right: 8px;
    display: flex;
    align-items: center;
    gap: 19px;
}

.collapse {
    width: 20px;
    height: 18px;
}

.help {
    width: 32px;
    height: 32px;
    border-radius: 50%;
    text-align: center;
    line-height: 32px;
    font-size: 26px;
    font-weight: 700;
    color: #fff;
    background: #4d7fd0;
}

.ribbon {
    height: 217px;
    flex: none;
    display: flex;
    background: linear-gradient(#fefefe, #fcfcfd 50%, #eceef1);
    border-top: 2px solid #b4b6ba;
    border-bottom: 3px solid #8f9296;
    font-size: 25px;
    color: #4a4a4a;
    white-space: nowrap;
}

.group {
    display: flex;
    flex-direction: column;
    flex: none;
    border-right: 2px solid #c9ccd1;
}

.group-clip { width: 236px; }
.group-slides { width: 252px; }
.group-font { width: 494px; }
.group-para { width: 633px; }
.group-draw { width: 698px; }
.group-edit { width: 147px; }

.group-body {
    height: 172px;
    flex: none;
    display: flex;
}

.group-label {
    position: relative;
    height: 40px;
    color: #777;
    font-size: 25px;
    line-height: 38px;
    text-align: center;
}

.label-clip { padding-right: 40px; }
.label-font { padding-right: 38px; }
.label-para { padding-right: 36px; }
.draw-label { padding-right: 38px; }

.launcher {
    position: absolute;
    right: 10px;
    top: 11px;
    width: 14px;
    height: 16px;
}

.caret {
    width: 0;
    height: 0;
    flex: none;
    margin-left: 10px;
    border-left: 5px solid transparent;
    border-right: 5px solid transparent;
    border-top: 7px solid #666;
}

.caret-dark {
    border-top-color: #333;
}

.caret-off {
    border-top-color: #c0c2c6;
}

.caret-up {
    margin: 0;
    border-top: 0;
    border-bottom: 7px solid #d0d3d8;
}

.tall {
    display: flex;
    flex-direction: column;
    align-items: center;
    flex: none;
}

.tall-caret {
    margin: 10px 0 0;
}

.tall-line {
    display: flex;
    align-items: center;
    height: 36px;
}

.paste {
    width: 100px;
    padding: 10px 20px 0 26px;
}

.paste-ico {
    width: 54px;
    height: 63px;
    margin-bottom: 12px;
}

.paste span {
    line-height: 36px;
}

.small-col {
    padding-top: 3px;
    display: flex;
    flex-direction: column;
}

.small {
    height: 53px;
    display: flex;
    align-items: center;
}

.small span {
    margin-left: 10px;
}

.off {
    color: #a5a7ab;
}

.ico {
    width: 32px;
    height: 32px;
}

.ico-s {
    width: 26px;
    height: 30px;
}

.group-clip .small {
    padding-left: 5px;
}

.group-clip .small span {
    margin-left: 13px;
}

.new-slide {
    width: 105px;
    margin-left: 9px;
    margin-right: 10px;
    padding-top: 15px;
}

.new-ico {
    width: 62px;
    height: 60px;
    margin-bottom: 8px;
}

.font-body {
    padding: 25px 0 0 12px;
    flex-direction: column;
}

.font-row {
    display: flex;
    align-items: center;
    height: 53px;
    color: #777;
}

.font-row-b {
    height: 40px;
    margin-top: 25px;
    font-family: "Liberation Serif", serif;
    font-size: 28px;
}

.combo {
    height: 53px;
    display: flex;
    align-items: center;
    justify-content: flex-end;
    padding-right: 10px;
    background: #fbfbfc;
    border: 2px solid #e3e4e7;
}

.combo-name {
    width: 220px;
}

.combo-size {
    width: 90px;
    border-left: 0;
    color: #aaa;
    font-size: 26px;
    justify-content: space-between;
    padding-left: 7px;
}

.grow-a, .shrink-a {
    font-family: "Liberation Serif", serif;
    line-height: 1;
    display: flex;
    align-items: flex-start;
}

.grow-a {
    margin-left: 12px;
    font-size: 40px;
}

.shrink-a {
    margin-left: 20px;
    font-size: 30px;
    padding-top: 6px;
}

.grow-a sup, .shrink-a sup {
    font-size: 10px;
    color: #aaa;
}

.vsep {
    width: 2px;
    height: 44px;
    background: #e3e4e7;
    flex: none;
}

.shrink-a + .vsep {
    margin-left: 12px;
}

.clear-ico {
    width: 34px;
    height: 36px;
    margin-left: 18px;
}

.fmt {
    width: 50px;
    display: flex;
    justify-content: center;
    align-items: center;
}

.fmt .caret {
    margin-left: 4px;
}

.fmt-b { font-weight: 700; font-size: 32px; }
.fmt-i { font-style: italic; font-size: 32px; }
.fmt-u { text-decoration: underline; font-size: 30px; }
.fmt-sh { font-weight: 700; font-size: 32px; text-shadow: 2px 2px 2px #bbb; }
.fmt-st { text-decoration: line-through; font-size: 28px; }
.fmt-av { font-size: 22px; width: 60px; margin-left: 2px; }
.fmt-aa { font-size: 34px; width: 62px; margin-left: 6px; }
.fmt-color { font-size: 38px; width: 62px; margin-left: 12px; }

.av-stack {
    display: flex;
    flex-direction: column;
    align-items: center;
    line-height: 24px;
}

.av-arrow {
    width: 30px;
    height: 12px;
}

.vsep-b {
    margin-left: 8px;
    height: 50px;
}

.para-left {
    width: 363px;
    padding: 32px 0 0 23px;
    flex: none;
}

.para-row {
    display: flex;
    align-items: center;
    height: 36px;
}

.para-row-b {
    margin-top: 34px;
}

.pico {
    width: 30px;
    height: 30px;
    flex: none;
}

.pico.al {
    height: 24px;
    margin-right: 20px;
}

.pico-w {
    width: 33px;
    height: 32px;
}

.pico-gap {
    margin-left: 13px;
}

.pcaret {
    margin: 0 15px 0 14px;
}

.vsep-p { margin-right: 20px; }
.vsep-q { margin: 0 18px 0 14px; }
.vsep-r { margin: 0 19px 0 16px; }

.pico-col {
    width: 28px;
    height: 28px;
}

.gallery {
    width: 290px;
    height: 125px;
    margin: 10px 0 0 13px;
    display: flex;
    background: #fff;
    border: 2px solid #c5c8ce;
    flex: none;
}

.shapes {
    width: 258px;
    height: 121px;
}

.gal-scroll {
    width: 30px;
    display: flex;
    flex-direction: column;
    background: #f6f6f7;
    border-left: 2px solid #dfe1e4;
}

.gal-cell {
    flex: 1;
    display: flex;
    flex-direction: column;
    gap: 5px;
    align-items: center;
    justify-content: center;
    border-bottom: 2px solid #dfe1e4;
}

.gal-more {
    border-bottom: 0;
}

.gal-cell .caret {
    margin: 0;
}

.gal-dash {
    width: 12px;
    height: 2px;
    background: #444;
}

.arrange {
    width: 64px;
    margin-left: 18px;
    padding-top: 10px;
}

.arr-ico {
    width: 64px;
    height: 63px;
    margin-bottom: 10px;
}

.quick {
    width: 102px;
    margin-left: 18px;
    padding-top: 12px;
}

.quick-ico {
    width: 62px;
    height: 63px;
    margin-bottom: 8px;
}

.small-col.compact-col {
    padding-top: 1px;
}

.compact-col .small {
    height: 46.500px;
}

.format-col {
    margin-left: 15px;
}

.format-col .small span {
    margin-left: 6px;
}

.group-edit .compact-col {
    margin-left: 18px;
}

.ico-ab {
    font-size: 17px;
    font-weight: 700;
    fill: #444;
}

.ico-ab-b {
    fill: #aaa;
    font-weight: 400;
}

.ico-ac {
    font-size: 18px;
    font-weight: 700;
    fill: #2e6b4e;
}

/* Work area */
.work {
    height: 1171px;
    flex: none;
    display: flex;
    background: #eceef1;
}

.panel {
    width: 365px;
    flex: none;
    display: flex;
    flex-direction: column;
    padding-top: 8px;
    background: linear-gradient(#eceef1 8px, #bcc0c8 8px);
}

.panel-tabs {
    height: 45px;
    flex: none;
    display: flex;
    font-size: 25px;
    color: #555;
}

.ptab {
    width: 128px;
    text-align: center;
    line-height: 45px;
    background: #b6b9c0;
    border-right: 2px solid #9da0a7;
    border-bottom: 2px solid #9da0a7;
}

.ptab-active {
    width: 125px;
    background: linear-gradient(#dfe2e8, #c5c8cf);
    border-bottom: 0;
}

.ptab-close {
    flex: 1;
    display: flex;
    align-items: center;
    justify-content: flex-end;
    padding-right: 14px;
    border-right: 0;
}

.ptab-x {
    width: 22px;
    height: 20px;
}

.panel-list {
    flex: 1;
    min-height: 0;
    display: flex;
    overflow: hidden;
}

.thumbs {
    width: 331px;
    flex: none;
    padding-top: 9px;
}

.thumb-row {
    width: 316px;
    height: 167px;
    margin: 0 0 9px 7px;
    padding: 9px 0 9px 43px;
    display: flex;
    position: relative;
}

.thumb-row-active {
    background: linear-gradient(#f8c95e, #fde88c 60%, #fbf08a);
    border: 1px solid #d8a860;
    border-top: 3px solid #c8a000;
    border-radius: 5px;
    padding: 6px 0 8px 42px;
}

.num {
    position: absolute;
    left: 3px;
    top: 16px;
    color: #333;
    font-family: "DejaVu Sans", sans-serif;
    font-size: 21px;
    font-weight: 700;
}

.thumb-row-active .num {
    top: 13px;
    left: 2px;
    color: #4c2140;
}

.thumb {
    width: 264px;
    height: 149px;
    background: #fff;
    box-shadow: 0 0 2px #666, 3px 3px 9px #8b8e95;
}

.thumb-row-active .thumb {
    box-shadow: 0 0 0 2px #8e9440;
}

.panel-scroll {
    flex: 1;
    position: relative;
    display: flex;
    flex-direction: column;
    align-items: center;
    padding: 16px 0 14px;
    background: #d8dde6;
}

.tri {
    width: 0;
    height: 0;
    flex: none;
    border-left: 10px solid transparent;
    border-right: 10px solid transparent;
}

.tri-up {
    border-bottom: 9px solid #333;
}

.tri-down {
    border-top: 10px solid #555;
}

.panel-thumb {
    width: 31px;
    height: 140px;
    margin-top: 228px;
    display: flex;
    align-items: center;
    justify-content: center;
    background: linear-gradient(90deg, #f6f7f9, #dfe2e6);
    border: 1px solid #8a8d93;
}

.panel-scroll .tri-down {
    margin-top: auto;
}

.grip {
    width: 16px;
    height: 12px;
    border-top: 2px solid #888;
    border-bottom: 2px solid #888;
    background: linear-gradient(#888, #888) center/100% 2px no-repeat;
}

.main {
    flex: 1;
    margin-left: 10px;
    padding-top: 7px;
    display: flex;
    flex-direction: column;
    position: relative;
    min-width: 0;
}

.view {
    height: 1147px;
    flex: none;
    display: flex;
    overflow: hidden;
}

.pad {
    background: #babcc2;
    flex: none;
}

.pad-left {
    width: 150px;
    background: linear-gradient(90deg, #b9bcc3 90%, #9b9da2);
    border-left: 2px solid #9a9ca2;
}

.pad-right {
    width: 145px;
    background: linear-gradient(90deg, #9b9da2, #babcc2 12%);
}

.slide {
    width: 2176px;
    flex: none;
    position: relative;
    overflow: hidden;
    padding: 310px 0 0 97px;
    display: flex;
    align-items: flex-start;
    background: #fefefe;
}

.slide-deco {
    position: absolute;
    left: 28px;
    top: 0;
    width: 112px;
    height: 56px;
}

.diagram {
    position: relative;
    height: 608px;
    display: flex;
    align-items: center;
}

.diagram-a {
    width: 804px;
    gap: 15px;
}

.diagram-b {
    width: 855px;
    margin-left: 192px;
    gap: 21px;
}

.big-arrow {
    position: absolute;
    left: 0;
    top: 0;
    height: 608px;
    fill: #d6deee;
}

.diagram-a .big-arrow { width: 763px; margin-left: 1px; }
.diagram-b .big-arrow { width: 791px; }

.box {
    position: relative;
    height: 242px;
    padding-bottom: 14px;
    display: flex;
    align-items: center;
    justify-content: center;
    text-align: center;
    background: #5b9bd5;
    border: 2px solid #dbe8f7;
    border-radius: 44px;
    color: #fff;
    font-family: "Noto Sans CJK SC", sans-serif;
    font-size: 59px;
    line-height: 69px;
}

.box-narrow {
    width: 258px;
}

.box-big {
    font-size: 68px;
    line-height: 85px;
}

.box-wide {
    width: 417px;
}

.vscroll {
    width: 34px;
    flex: none;
    display: flex;
    flex-direction: column;
    align-items: center;
    padding-top: 13px;
    background: #d8dde6;
}

.vs-thumb {
    width: 30px;
    height: 36px;
    margin-top: 546px;
    display: flex;
    align-items: center;
    justify-content: center;
    background: #eceef2;
    border: 1px solid #9a9da3;
}

.vscroll .tri-off {
    margin-top: auto;
    border-top-color: #777;
}

.vs-line {
    width: 100%;
    height: 3px;
    margin: 14px 0 8px;
    background: #333;
}

.vscroll .tri {
    border-left-width: 8px;
    border-right-width: 8px;
}

.tri-pair {
    margin-bottom: 2px;
}

.vscroll .tri-next {
    margin-top: 14px;
}

.vscroll > .tri:last-child {
    margin-bottom: 37px;
}

.hband {
    flex: 1;
    background: #f2f3f8;
    border-top: 2px solid #a5a6ab;
    border-bottom: 4px solid #94979c;
}

.cursor {
    position: absolute;
    left: 1247px;
    top: 70px;
    width: 26px;
    height: 39px;
}

/* IME floating bar */
.ime {
    position: absolute;
    right: 32px;
    top: 120px;
    width: 428px;
    height: 122px;
    padding: 1px 8px 6px 7px;
    display: flex;
    gap: 7px;
    background: #060607;
    border-style: solid;
    border-color: #2a2b2d;
    border-width: 11px 10px 12px;
    border-radius: 22px;
}

.key {
    --glow: #0f6f80;
    width: 92px;
    height: 92px;
    flex: none;
    display: flex;
    align-items: center;
    justify-content: center;
    border-radius: 12px;
    border-bottom: 4px solid var(--glow);
    background:
        linear-gradient(transparent 35%, var(--glow)) left/2px 100% no-repeat,
        linear-gradient(transparent 35%, var(--glow)) right/2px 100% no-repeat,
        linear-gradient(#38383a, #2a2a2c);
    font-family: "Noto Sans CJK SC", sans-serif;
}

.key-zh {
    padding-left: 6px;
    color: #00c4b8;
    font-size: 38px;
}

.key-punc {
    --glow: #0e7a42;
    padding: 0 0 6px 8px;
    color: #0fb84a;
    font-family: "DejaVu Sans", sans-serif;
    font-size: 31px;
    font-weight: 700;
    letter-spacing: 5px;
}

.key-moon {
    --glow: #7d8a10;
}

.key-skin {
    --glow: #5aa838;
    border: 0;
    background:
        linear-gradient(90deg, #0f9fd8, #2cc16e 50%, #e2ae0e) bottom/100% 5px no-repeat,
        linear-gradient(transparent 35%, #0f9fd8) left/2px 100% no-repeat,
        linear-gradient(transparent 35%, #d8b010) right/2px 100% no-repeat,
        repeating-linear-gradient(135deg, #353537 0 3px, #2b2b2d 3px 6px);
}

.key-ico {
    width: 26px;
    height: 25px;
}

.key-shirt {
    width: 35px;
    height: 26px;
}

/* Status bar */
.status {
    height: 44px;
    flex: none;
    display: flex;
    align-items: stretch;
    background: linear-gradient(#eef0f5, #bfc2c8);
    color: #555;
    font-size: 25px;
    white-space: nowrap;
}

.st-item {
    display: flex;
    align-items: center;
    padding-bottom: 3px;
    border-right: 2px solid #a9acb2;
}

.st-count {
    width: 342px;
    padding-left: 18px;
    font-size: 26px;
}

.st-theme {
    width: 223px;
    justify-content: center;
    font-size: 26px;
}

.st-lang {
    width: 225px;
    padding-left: 17px;
}

.st-book {
    width: 36px;
    height: 36px;
    margin-right: 35px;
}

.st-right {
    margin-left: auto;
    padding-right: 11px;
    display: flex;
    align-items: center;
}

.st-sep {
    width: 2px;
    height: 36px;
    background: #777;
    margin-right: 9px;
}

.vw {
    width: 38px;
    height: 38px;
    display: flex;
    align-items: center;
    justify-content: center;
    background: linear-gradient(#f8c95e, #fdf07c);
    border: 1px solid #d8a860;
    border-radius: 4px;
    margin-right: 10px;
}

.vw svg {
    width: 26px;
    height: 28px;
}

.vw-ico {
    width: 24px;
    height: 28px;
    margin-right: 14px;
}

.zoom-pct {
    margin: 0 18px 0 14px;
    font-size: 26px;
}

.zm-btn {
    width: 32px;
    height: 32px;
    flex: none;
    border-radius: 50%;
    border: 2px solid #a9acb2;
    background: #f4f5f7;
    color: #555;
    text-align: center;
    font-size: 32px;
    font-weight: 700;
    line-height: 27px;
}

.zm-track {
    width: 214px;
    height: 2px;
    background: #909398;
    position: relative;
}

.zm-thumb {
    position: absolute;
    left: 78px;
    top: -14px;
    width: 18px;
    height: 27px;
    background: #f7f7f9;
    border: 1px solid #888;
    clip-path: polygon(0 0, 100% 0, 100% 65%, 50% 100%, 0 65%);
}

.zm-fit {
    width: 33px;
    height: 33px;
    margin-left: 18px;
}

/* Zoom controls */
.zoombar {
    height: 106px;
    margin-top: 24px;
    flex: none;
    display: flex;
    background: #1c1d1f;
    color: #dcdcdc;
    font-size: 24px;
    white-space: nowrap;
}

.ctrl {
    padding-top: 12px;
    display: flex;
    flex-direction: column;
    align-items: center;
    flex: none;
}

.ctrl > span {
    line-height: 28px;
}

.ctrl-ico {
    width: 50px;
    height: 50px;
    margin-bottom: 8px;
}

.ctrl-mute { width: 128px; }
.ctrl-video { width: 144px; }
.ctrl-invite { width: 130px; margin-left: 810px; }
.ctrl-part { width: 226px; }
.ctrl-share { width: 154px; }
.ctrl-chat { width: 186px; }

.ctrl-ico-video { width: 58px; }
.ctrl-ico-invite { width: 56px; }
.ctrl-ico-part { width: 60px; }
.ctrl-ico-share { width: 46px; }
.ctrl-ico-chat { width: 52px; }

.ctrl-chev {
    width: 44px;
    padding-top: 39px;
    display: flex;
    justify-content: center;
    flex: none;
}

.up-chev {
    width: 28px;
    height: 18px;
}

.part-ico {
    position: relative;
}

.part-count {
    position: absolute;
    left: 66px;
    top: 1px;
    font-size: 24px;
}

.leave {
    margin-left: auto;
    padding: 43px 20px 0 0;
    color: #e64a3e;
    font-size: 25.500px;
}
```
